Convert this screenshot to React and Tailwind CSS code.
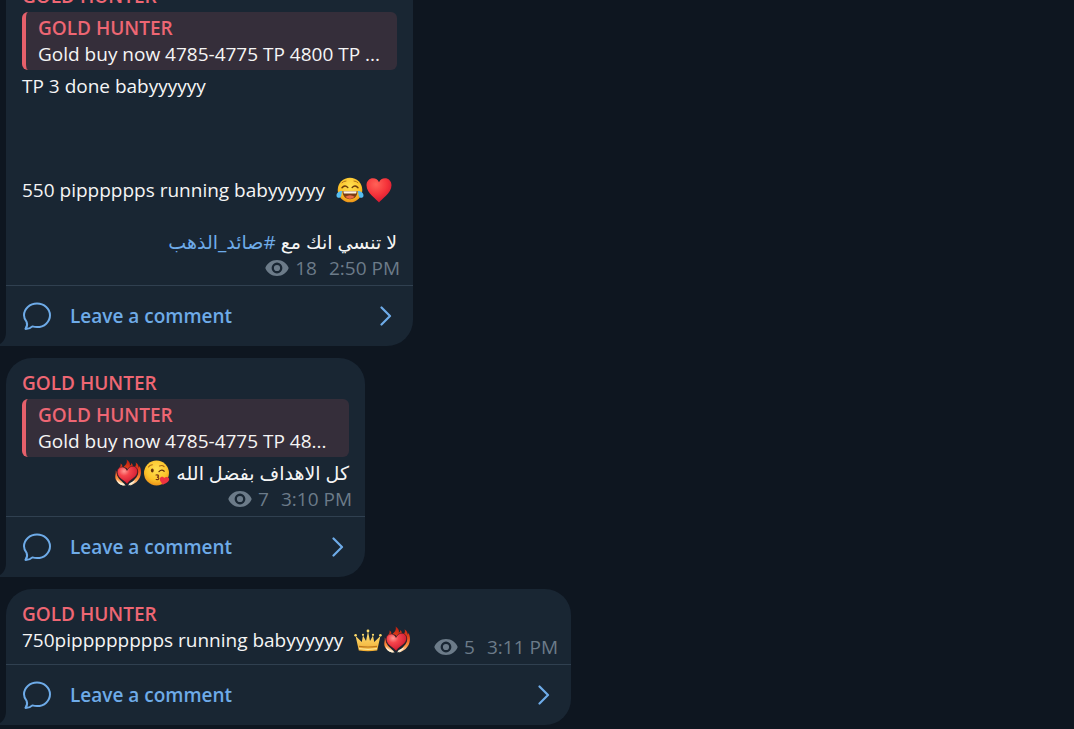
import React from "react";

function Laugh() {
  return (
    <svg role="img" aria-label="Face with tears of joy" viewBox="0 0 28 28" className="h-7 w-7 shrink-0">
      <defs>
        <radialGradient id="faceLaugh" cx="50%" cy="35%" r="65%">
          <stop offset="0" stopColor="#ffe052" />
          <stop offset="0.65" stopColor="#fcc42b" />
          <stop offset="1" stopColor="#ee9418" />
        </radialGradient>
      </defs>
      <circle cx="14" cy="14" r="12.3" fill="url(#faceLaugh)" />
      <path d="M6 6.800q1.500-1.800 4-1.800M18 5q2.500 0 4 1.800" fill="none" stroke="#b8741b" strokeWidth="1" strokeLinecap="round" />
      <path d="M6 11.800q2.800-3.400 5.800-.4M16.200 11.400q3-3 5.800.4" fill="none" stroke="#6b3a0c" strokeWidth="1.400" strokeLinecap="round" />
      <path d="M6.500 15h15c0 5-3 8.200-7.500 8.200S6.500 20 6.500 15z" fill="#7a3c12" />
      <path d="M7.300 15.200h13.400l-.6 2.200H7.900z" fill="#fff3e0" />
      <path d="M9.300 20.800q4.700-3.200 9.400 0Q17 22.900 14 22.900t-4.700-2.100z" fill="#ea6a45" />
      <path d="M6.200 15C3.200 15 .3 17 .5 19.800c.3 2.600 3.800 2.800 4.700.2.500-1.600.4-3.200 1-5z" fill="#55bdf0" />
      <path d="M21.800 15c3 0 5.900 2 5.700 4.800-.3 2.600-3.800 2.800-4.700.2-.5-1.600-.4-3.200-1-5z" fill="#55bdf0" />
    </svg>
  );
}

function Heart() {
  return (
    <svg role="img" aria-label="Red heart" viewBox="0 0 28 28" className="h-7 w-7 shrink-0">
      <defs>
        <radialGradient id="heartRed" cx="38%" cy="25%" r="80%">
          <stop offset="0" stopColor="#ff6257" />
          <stop offset="0.55" stopColor="#f5333a" />
          <stop offset="1" stopColor="#cf1530" />
        </radialGradient>
      </defs>
      <path d="M14 26.500C12 23.500 1.500 17.500 1.500 9.300 1.500 5 4.500 2.300 8 2.300c2.800 0 5 1.600 6 4 1-2.400 3.200-4 6-4 3.500 0 6.500 2.700 6.500 7C26.500 17.500 16 23.500 14 26.500z" fill="url(#heartRed)" />
    </svg>
  );
}

function Kiss() {
  return (
    <svg role="img" aria-label="Face blowing a kiss" viewBox="0 0 28 28" className="h-7 w-7 shrink-0">
      <defs>
        <radialGradient id="faceKiss" cx="50%" cy="35%" r="65%">
          <stop offset="0" stopColor="#ffe052" />
          <stop offset="0.65" stopColor="#fcc42b" />
          <stop offset="1" stopColor="#ee9418" />
        </radialGradient>
      </defs>
      <circle cx="13.500" cy="14" r="12.500" fill="url(#faceKiss)" />
      <ellipse cx="9.300" cy="11.500" rx="1.400" ry="1.900" fill="#63300c" />
      <path d="M16 12.600q2.600-2.600 5.200-.4" fill="none" stroke="#63300c" strokeWidth="1.300" strokeLinecap="round" />
      <path d="M5.500 8q1.300-2 3.800-2.200M16.500 7q2.800-1.200 4.600.6" fill="none" stroke="#a86316" strokeWidth="1.100" strokeLinecap="round" />
      <path d="M13 16c3.200-.5 3.200 1.900 1 2.100 2.600.2 2.400 2.900-.8 2.400" fill="none" stroke="#7a3512" strokeWidth="1.200" strokeLinecap="round" />
      <path d="M19.800 26c-.6-2-3.400-3.600-2.900-6.400.5-2.100 3.200-2.500 4.300-.6 1.400-1.700 4.300-1.400 4.900.8.800 3.200-4.200 4.600-6.300 6.200z" fill="#ef3340" />
    </svg>
  );
}

function BurningHeart({ id }) {
  return (
    <svg role="img" aria-label="Heart on fire" viewBox="0 0 28 28" className="h-7 w-7 shrink-0">
      <defs>
        <linearGradient id={`${id}-flame`} x1="0" y1="0" x2="0" y2="28" gradientUnits="userSpaceOnUse">
          <stop offset="0" stopColor="#b81c10" />
          <stop offset="0.4" stopColor="#e8431a" />
          <stop offset="0.7" stopColor="#ff9440" />
          <stop offset="1" stopColor="#fff2d6" />
        </linearGradient>
        <radialGradient id={`${id}-heart`} cx="34%" cy="28%" r="75%">
          <stop offset="0" stopColor="#ff9a94" />
          <stop offset="0.35" stopColor="#f5444b" />
          <stop offset="1" stopColor="#cc1730" />
        </radialGradient>
      </defs>
      <g fill={`url(#${id}-flame)`}>
        <path d="M4.800 9.500C5.800 8 7 7 6.600 4.500c1.600 1 2 2.300 1.700 3.500z" />
        <path d="M9.500 8c2-1.600 4.200-3.700 3.100-7.400 2.700 1.700 3.800 4 3.200 6.200.9-.5 1.500-1.500 1.600-2.800 1.400 1.500 1.600 2.600 1.200 3.600-2 .2-3.800 1-5 2.600C12.600 8.900 11.200 8.200 9.500 8z" />
        <path d="M20.800 7.800c1.200-1 1.500-2.600.8-4.600 2.200 1.400 3.200 3.400 3 5.600.4-.3.800-.9 1-1.700 1.400 3 1.800 6.200.9 9.300-1.500 5.400-5.500 8.400-10.700 10.200 1.500-4.100 6.800-6.400 8.200-11.600.8-3-.6-6-3.200-7.200z" />
        <path d="M1.700 11.500c.7.500 1 1.200 1 2.200.2 6.300 6.200 8.600 8.900 12.900C6 26.800.8 22.300 1.300 17c.2-1.900.7-3.200.4-5.500z" />
      </g>
      <path d="M13.300 25C10.500 21.500 3.500 19.500 3.200 13.300 3 9.900 5.500 7.800 8.400 8c2.200.2 3.800 1.600 4.600 3.400 1.300-2.600 3.400-4.500 6.200-4.200 3.400.4 5 3.500 4.200 6.900-1.300 5.200-8.200 6.500-10.100 10.900z" fill={`url(#${id}-heart)`} stroke="#4b151b" strokeWidth="0.600" />
      <path d="M3 20.500c1.500 2.700 4 3.800 7.500 4.400l-1.200 1.700C5.500 25.700 3.200 23.700 3 20.500zM21 21.500c-1.300 2.500-3.500 4.100-6.500 5 0-2.200 3-3.400 6.500-5z" fill="#fff2d6" />
    </svg>
  );
}

function Crown() {
  return (
    <svg role="img" aria-label="Crown" viewBox="0 0 28 28" className="h-7 w-7 shrink-0">
      <defs>
        <linearGradient id="crownGold" x1="0" y1="0" x2="0" y2="1">
          <stop offset="0" stopColor="#ffe27a" />
          <stop offset="1" stopColor="#f0ad32" />
        </linearGradient>
      </defs>
      <path d="M4.800 24.500 1.600 10l6.200 6L9 9.500l3 5.500L14 5.500l2 9.500 3-5.500 1.200 6.500 6.200-6-3.200 14.500q-9.200 1.400-18.400 0z" fill="url(#crownGold)" />
      <path d="M5 20.300q9 1.400 18 0" fill="none" stroke="#b9741c" strokeWidth="1.200" />
      <path d="M5 22.700q9 1.400 18 0" fill="none" stroke="#fff0a8" strokeWidth="1" />
      <g fill="#ffdc6b">
        <circle cx="1.600" cy="9.200" r="1.300" />
        <circle cx="9" cy="8.800" r="1.100" />
        <circle cx="14" cy="5" r="1.400" />
        <circle cx="19" cy="8.800" r="1.100" />
        <circle cx="26.400" cy="9.200" r="1.300" />
      </g>
    </svg>
  );
}

function Meta({ views, time }) {
  return (
    <div className="flex shrink-0 items-center justify-end text-[#6c7b89]">
      <svg aria-hidden="true" viewBox="0 0 24 16" className="h-4 w-6">
        <path fillRule="evenodd" fill="currentColor" d="M12 0C6.500 0 2 3.300.3 8 2 12.700 6.500 16 12 16s10-3.300 11.700-8C22 3.300 17.500 0 12 0zm0 2.600a5.400 5.400 0 1 1 0 10.800 5.400 5.400 0 0 1 0-10.800zm0 2.300a3.100 3.100 0 1 0 0 6.200 3.100 3.100 0 0 0 0-6.200z" />
      </svg>
      <span className="ml-1.5">{views}</span>
      <time className="ml-3">{time}</time>
    </div>
  );
}

function Author() {
  return <h2 className="font-semibold text-[#ee6673]">GOLD HUNTER</h2>;
}

function Quote({ text }) {
  return (
    <blockquote className="my-[3px] rounded-md border-l-4 border-[#e5606b] bg-[#352e3a] py-[3px] pr-2 pl-3">
      <Author />
      <p className="truncate">{text}</p>
    </blockquote>
  );
}

function Bubble({ className, children }) {
  return (
    <article className="flex max-w-full shrink-0 items-end">
      <svg aria-hidden="true" viewBox="0 0 6 14" className="h-3.5 w-1.5 shrink-0 text-[#192633]">
        <path d="M6 0C6 5 4 9.500 0 12v2h6z" fill="currentColor" />
      </svg>
      <div className={`min-w-0 rounded-[26px] rounded-bl-none bg-[#192633] ${className}`}>
        {children}
        <button type="button" className="flex h-[61px] w-full items-center border-t border-[#304050] pr-5 pl-4 text-left font-semibold text-[#6eabe8]">
          <svg aria-hidden="true" viewBox="0 0 30 30" className="h-[30px] w-[30px]" fill="none" stroke="currentColor" strokeWidth="2" strokeLinejoin="round">
            <path d="M4.600 20.800C2.900 18.900 2 16.700 2 14.300 2 7.800 7.800 2.500 15 2.500s13 5.300 13 11.800-5.800 11.800-13 11.800c-1.600 0-3.200-.3-4.600-.7-1.500 1.500-4 2.600-6.600 2.600-.3 0-.4-.3-.2-.5 1.300-1.500 1.900-4 1-6.700z" />
          </svg>
          <span className="ml-[18px] flex-1">Leave a comment</span>
          <svg aria-hidden="true" viewBox="0 0 14 20" className="h-5 w-3.5" fill="none" stroke="currentColor" strokeWidth="2.200" strokeLinecap="round" strokeLinejoin="round">
            <path d="M2.500 1.500 11 10l-8.500 8.500" />
          </svg>
        </button>
      </div>
    </article>
  );
}

export default function App() {
  return (
    <main className="flex h-screen flex-col justify-end gap-3 overflow-hidden bg-[#0e1620] pb-1 font-['Open_Sans','Noto_Sans','DejaVu_Sans',sans-serif] text-[19px] leading-[26px] text-[#f5f5f5]">
      <Bubble className="w-[407px]">
        <div className="px-4 pt-3 pb-1">
          <Author />
          <Quote text="Gold buy now 4785-4775 TP 4800 TP ..." />
          <p>TP 3 done babyyyyyy</p>
          <p className="mt-[78px] flex h-[26px] items-center gap-px">
            <span className="mr-2.5">550 pipppppps running babyyyyyy</span>
            <Laugh />
            <Heart />
          </p>
          <p dir="rtl" className="mt-[26px] h-[26px]">
            لا تنسي انك مع <a href="#channel" className="text-[#6eabe8]">#صائد_الذهب</a>
          </p>
          <div className="-mr-[3px]">
            <Meta views="18" time="2:50 PM" />
          </div>
        </div>
      </Bubble>

      <Bubble className="w-[359px]">
        <div className="px-4 pt-3 pb-1">
          <Author />
          <Quote text="Gold buy now 4785-4775 TP 48..." />
          <p dir="rtl" className="flex h-[26px] items-center gap-px">
            <span className="ml-1">كل الاهداف بفضل الله</span>
            <Kiss />
            <BurningHeart id="reply" />
          </p>
          <div className="-mr-[3px]">
            <Meta views="7" time="3:10 PM" />
          </div>
        </div>
      </Bubble>

      <Bubble className="w-[565px]">
        <div className="pt-3 pr-[13px] pb-1 pl-4">
          <Author />
          <div className="flex items-start justify-between">
            <p className="flex h-[26px] items-center gap-px">
              <span className="mr-2.5">750pipppppppps running babyyyyyy</span>
              <Crown />
              <BurningHeart id="latest" />
            </p>
            <div className="pt-[7px]">
              <Meta views="5" time="3:11 PM" />
            </div>
          </div>
        </div>
      </Bubble>
    </main>
  );
}
